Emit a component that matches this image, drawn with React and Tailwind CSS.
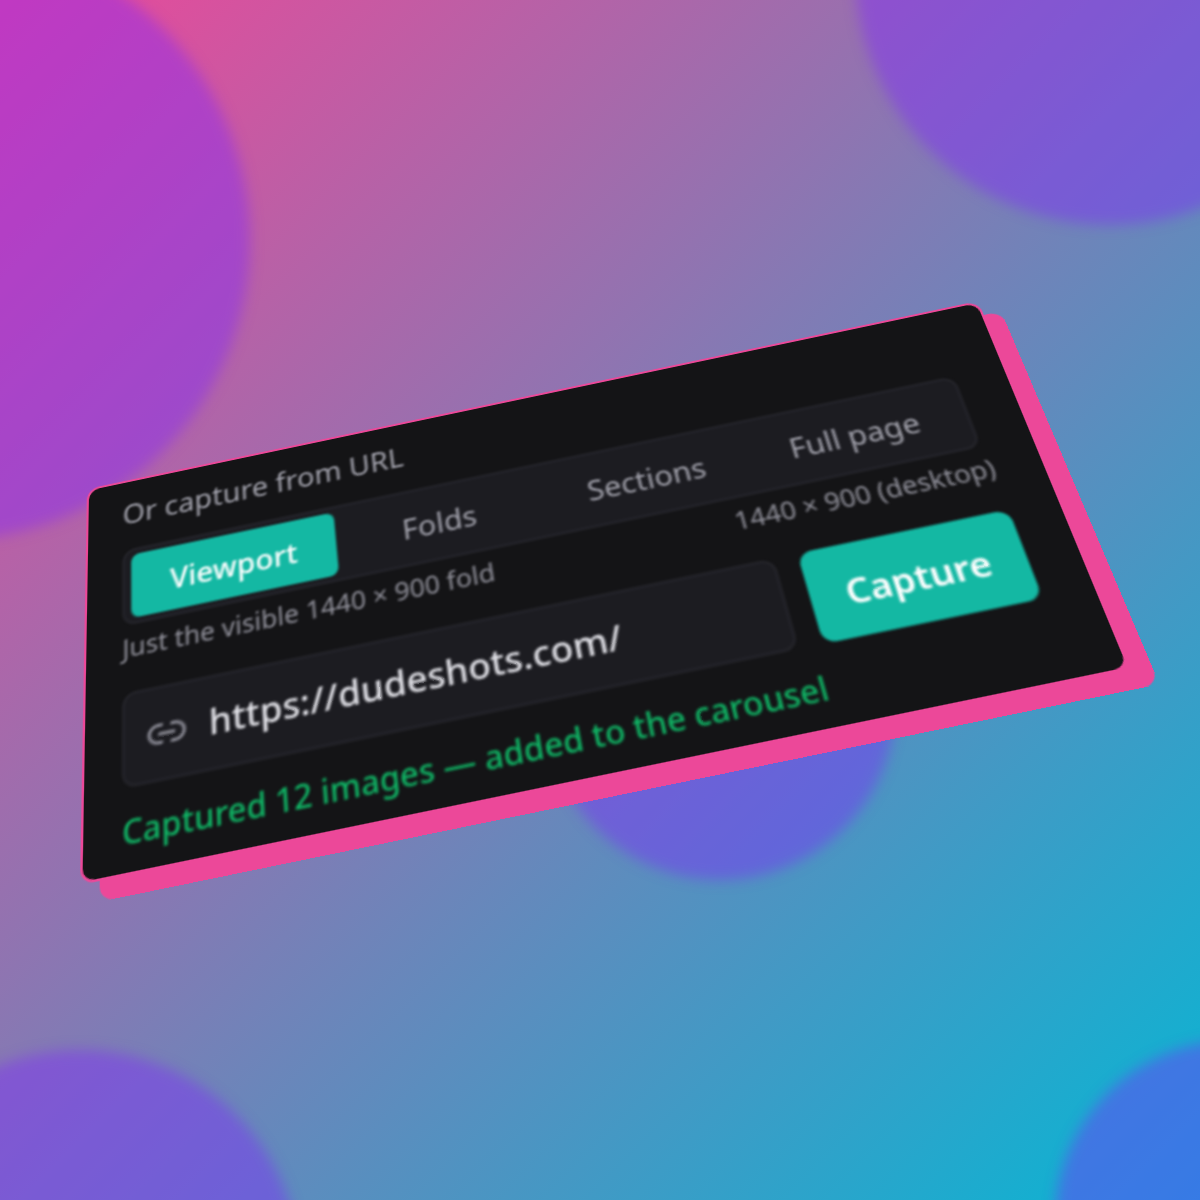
import React from "react";
import { Link2 } from "lucide-react";

const tabs = ["Viewport", "Folds", "Sections", "Full page"];

export default function App() {
  return (
    <div className="relative h-[1200px] w-[1200px] overflow-hidden bg-[linear-gradient(135deg,#ec4899,#06b6d4)] font-['Noto_Sans',sans-serif]">
      {/* background blobs */}
      <div className="absolute left-[-350px] top-[-60px] h-[600px] w-[600px] rounded-full bg-violet-600/40 blur-[7px]" />
      <div className="absolute left-[855px] top-[-285px] h-[510px] w-[510px] rounded-full bg-violet-600/40 blur-[7px]" />
      <div className="absolute left-[545px] top-[530px] h-[350px] w-[350px] rounded-full bg-violet-600/40 blur-[7px]" />
      <div className="absolute left-[-140px] top-[1050px] h-[440px] w-[440px] rounded-full bg-violet-600/40 blur-[7px]" />
      <div className="absolute left-[1055px] top-[1040px] h-[360px] w-[360px] rounded-full bg-violet-600/40 blur-[7px]" />

      <div className="w-[420px] h-[180px] origin-top-left will-change-transform [transform:matrix3d(2.09298,-0.45638,0,-0.0000291,-0.10578,1.46022,0,-0.00083589,0,0,1,0,87,489,0,1)] rounded-md border-[1.5px] border-[#ec4899] bg-[#141416] shadow-[8px_8px_0_#ec4899]">
        <div className="pl-4 pt-[9px] blur-[0.45px]">
          <div className="text-[13.5px] leading-4 text-[#a2a2ac]">Or capture from URL</div>

          <div className="mt-[10px] grid h-[37px] w-[380px] grid-cols-4 rounded-md border border-[#26262c] bg-[#1c1c21] px-[3px] py-[2px]">
            {tabs.map((t, i) => (
              <div
                key={t}
                className={`flex items-center justify-center rounded pt-[2px] text-[13.5px] ${i === 0 ? "bg-[#14b8a3] font-medium text-white" : "text-[#a2a2ac]"}`}
              >
                {t}
              </div>
            ))}
          </div>

          <div className="mt-1 flex w-[382px] justify-between text-[11.6px] leading-[14px] text-[#92929c]">
            <span>Just the visible 1440 × 900 fold</span>
            <span>1440 × 900 (desktop)</span>
          </div>

          <div className="mt-[13px] flex h-[41px] w-[381px] gap-[10px]">
            <div className="flex flex-1 items-center gap-[9px] rounded-md border border-[#26262c] bg-[#1c1c21] pl-[9px]">
              <Link2 size={18} className="text-[#85858f]" />
              <span className="text-[15.5px] font-medium text-[#e0e0e6]">https://dudeshots.com/</span>
            </div>
            <button className="w-[90px] rounded-md bg-[#14b8a3] pt-[2px] text-[15.5px] font-semibold text-white">Capture</button>
          </div>

          <div className="mt-[10px] text-[13.4px] font-medium leading-4 text-[#10b565]">Captured 12 images — added to the carousel</div>
        </div>
      </div>
    </div>
  );
}
